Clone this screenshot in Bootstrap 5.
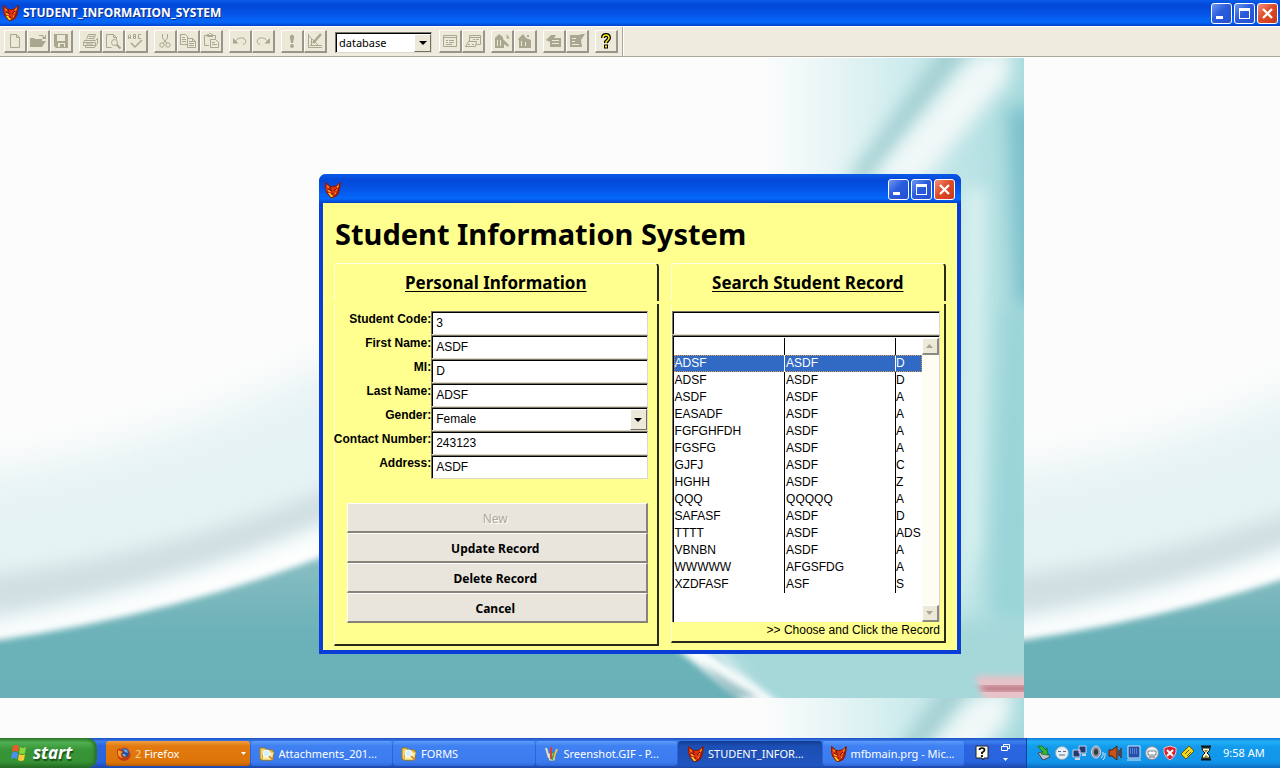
<!DOCTYPE html>
<html lang="en">
<head>
<meta charset="utf-8">
<meta name="viewport" content="width=device-width, initial-scale=1">
<title>STUDENT_INFORMATION_SYSTEM</title>
<link href="https://cdn.jsdelivr.net/npm/bootstrap@5.3.0/dist/css/bootstrap.min.css" rel="stylesheet">
<style>
  :root { --face: #ece9d8; --ui: "Noto Sans", "Open Sans", sans-serif; --arial: "Liberation Sans", Arial, sans-serif; }
  body { font: 12px/16px var(--arial); color: #000; background: #fdfdfd; }
  button, input, select { font: inherit; color: inherit; border-radius: 0; }
  svg { display: block; flex: none; }

  .xp-title { background: linear-gradient(#0a5ce8, #0348d8 20%, #0553e6 50%, #0468fb 85%, #0340c8); color: #fff; }
  .app-title { height: 26px; padding: 0 2px 0 3px; font: bold 12px/16px var(--ui); text-shadow: 1px 1px #0a2a80; }
  .cap-set { gap: 2px; }
  .cap-btn { width: 21px; height: 21px; padding: 0; border: 1px solid #fff; border-radius: 3px; background: linear-gradient(135deg, #6f98f0, #2b5cdd 45%, #2450d0); }
  .cap-close { background: linear-gradient(135deg, #f0917c, #df4c28 45%, #c8381a); }

  .tool-strip { height: 31px; padding: 0 4px; background: #eeecdf; border-top: 1px solid #fff; border-bottom: 1px solid #aca899; }
  .tool-group { margin-right: 6px; }
  .tool-btn { width: 23px; height: 23px; padding: 0; display: grid; place-items: center; color: #a9a790; background: var(--face); border: 1px solid #fff; border-right: 2px solid #98958a; border-bottom: 2px solid #98958a; }
  .tool-pick { width: 97px; height: 21px; margin: 2px 7px 0 2px; }
  .tool-end { width: 2px; height: 29px; border-left: 1px solid #aca899; border-right: 1px solid #fff; }

  .pick { position: relative; }
  .pick select { width: 100%; height: 100%; appearance: none; outline: 0; }
  .pick-arrow { position: absolute; right: 1px; top: 2px; bottom: 1px; width: 17px; display: grid; place-items: center; pointer-events: none; background: var(--face); border: 1px solid #fff; border-right-color: #716f64; border-bottom-color: #716f64; }
  .sunk { display: block; width: 100%; padding: 0 4px; background: #fff; border: 1px solid #dcd8c8; border-top-color: #77756a; border-left-color: #77756a; box-shadow: inset 1px 1px #000; outline: 0; }
  .tool-pick .sunk { font: 11px/15px var(--ui); padding: 0 3px; }

  .desk { border-top: 1px solid #fff; }
  .paper { position: absolute; inset: 0; width: 100%; height: 100%; }
  .dialog-win { position: relative; width: 100%; max-width: 642px; margin: 116px auto 0; border: 4px solid #0a3cd8; border-top: 0; border-radius: 7px 7px 0 0; background: #ffff8f; }
  .dialog-bar { height: 29px; margin: 0 -4px; padding: 2px 6px 0; border-radius: 7px 7px 0 0; }
  .dialog-body { padding: 13px 11px 4px; }
  .form-name { font: bold 29px/36px var(--ui); margin: 0 0 11px; padding-left: 1px; }

  .bevel-top, .bevel-rest { border-left: 1px solid #ffffd8; border-right: 2px solid #2a2a1c; }
  .bevel-top { height: 38px; padding-top: 7px; border-top: 1px solid #ffffe8; border-radius: 4px 4px 0 0; margin-bottom: 3px; }
  .bevel-top h2 { font: bold 17px/24px var(--ui); text-decoration: underline; text-underline-offset: 2px; margin: 0; text-align: center; }
  .bevel-rest { border-bottom: 2px solid #2a2a1c; padding-top: 7px; }
  .panel-info { flex: 324 1 0; margin-right: 12px; }
  .panel-find { flex: 275 1 0; }
  .panel-info .bevel-rest { padding-right: 9px; padding-bottom: 21px; }
  .panel-find .bevel-rest { padding: 7px 4px 3px 0; }

  .field-row { height: 24px; }
  .field-row label { flex: 96 1 0; min-width: 0; display: flex; justify-content: flex-end; font-weight: bold; white-space: nowrap; }
  .field-box { flex: 216 1 0; height: 24px; }
  .field-box .sunk { height: 24px; }
  .cmd-list { margin: 24px 0 0 12px; }
  .cmd-btn { height: 30px; padding: 2px 3px 0 0; font: bold 12px/16px var(--ui); background: #e9e5dc; border: 1px solid #fff; border-right: 2px solid #86847a; border-bottom: 2px solid #86847a; }
  .cmd-btn:disabled { font-weight: normal; color: #aca899; text-shadow: 1px 1px #fff; }

  .grid-box { height: 287px; padding: 2px 0 0 1px; border: 0; border-right: 1px solid #dcd8c8; border-top: 1px solid #77756a; border-left: 1px solid #77756a; box-shadow: inset 1px 1px #000; }
  .grid-table { table-layout: fixed; width: 100%; font: 12px/17px var(--arial); }
  .grid-table th, .grid-table td { height: 17px; padding: 0 0 0 1px; overflow: hidden; white-space: nowrap; font-weight: normal; }
  .grid-table th + th, .grid-table td + td { border-left: 1px solid #000; }
  .grid-table td:last-child { padding-left: 0; }
  .grid-table .c-wide { width: 111px; }
  .grid-table .picked { color: #fff; background: #316ac5; outline: 1px dotted #d89a4a; outline-offset: -1px; }
  .grid-table .picked td + td { border-left-color: #fff; }
  .scroll-rail { width: 17px; background: #fefdf3; }
  .scroll-btn { width: 17px; height: 17px; padding: 0; display: grid; place-items: center; background: var(--face); border: 1px solid #fff; border-right: 2px solid #8d8b80; border-bottom: 2px solid #8d8b80; }

  .task-strip { height: 30px; background: linear-gradient(#1d50c0, #3c80f0 12%, #2b66e0 25%, #2763dc 80%, #1c46a8); font: 11px/16px var(--ui); color: #fff; }
  .start-btn { width: 97px; height: 30px; padding: 0 0 0 9px; border: 0; border-radius: 0 10px 10px 0; color: #fff; background: linear-gradient(#2d7a2d, #4fae4f 15%, #379537 40%, #359235 80%, #226622); font: italic bold 17px/24px var(--ui); text-shadow: 1px 2px 1px #1d4f1d; box-shadow: inset -3px 0 3px #2a752a; }
  .task-list { margin-left: 9px; flex: 1 1 0; min-width: 0; }
  .task-btn { flex: 1 1 0; min-width: 0; height: 25px; margin: 3px 1px 0 0; padding: 0 4px 0 8px; border: 0; border-radius: 3px; color: #fff; text-align: left; background: linear-gradient(#5d9cfb, #3f80f2 20%, #3b7bee 85%, #2e66d8); }
  .task-alert { background: linear-gradient(#f0a040, #e27a10 20%, #dc7408 85%, #b95c00); padding-left: 10px; gap: 3px; }
  .task-count { color: #ffd08a; }
  .task-on { background: linear-gradient(#123a90, #1c4fb4 20%, #2054be); padding-left: 10px; }
  .lang-zone { width: 61px; gap: 12px; padding-right: 7px; }
  .tray { width: 254px; padding: 0 0 0 9px; border-left: 1px solid #0c3fa0; background: linear-gradient(#0f78d8, #20b0f5 12%, #129aec 30%, #1195ea 80%, #0c6cc0); }
  .tray time { margin-left: 6px; white-space: nowrap; }
</style>
</head>
<body class="d-flex flex-column min-vh-100">

<svg width="0" height="0" class="position-absolute" aria-hidden="true">
  <symbol id="fox" viewBox="0 0 16 16">
    <path d="M0 0l2 1 3 3h4l3-1 3-3 1 1-1 6-1 4-2 3-4 2H6l-3-3-2-3L0 6z" fill="#8c1a08"/>
    <path d="M1 2l4 3h5l4-3-1 5-1 4-3 3H7L3 11 1 7z" fill="#dc3410"/>
    <path d="M2 3l2 2-1 1zM14 2l-2 3 1 1zM3 11l2 0 2 2 1 2H6z" fill="#ffd21c"/>
    <path d="M3 8l3 1-1 1-2-1zM12 7l-2 2 2-1zM10 11l1-1-1 3z" fill="#ffe83a"/>
    <path d="M3 7l4 2M12 6L9 9M6 12h2M5 5l1 2" stroke="#400" stroke-width=".8" fill="none"/>
  </symbol>
  <symbol id="c-min" viewBox="0 0 19 19"><path d="M4 12h7v3H4z" fill="#fff"/></symbol>
  <symbol id="c-max" viewBox="0 0 19 19"><path d="M4 4h11v11H4zM5 7v7h9V7z" fill="#fff" fill-rule="evenodd"/></symbol>
  <symbol id="c-x" viewBox="0 0 19 19"><path d="M5 5l9 9M14 5l-9 9" stroke="#fff" stroke-width="2.300"/></symbol>
  <symbol id="folder" viewBox="0 0 16 16">
    <path d="M1 2h5l1 2h7v9l-2 1H2L1 12z" fill="#f6d568" stroke="#a07818"/>
    <path d="M4 6h11l-2 8H3z" fill="#ffeb9a" stroke="#b08820" stroke-width=".6"/>
    <circle cx="7.500" cy="7.500" r="3.500" fill="#d4f0ff" stroke="#fff"/><path d="M10 10l4 4" stroke="#d08030" stroke-width="1.600"/>
  </symbol>
</svg>

<header class="xp-title app-title d-flex align-items-center">
  <svg width="16" height="16"><use href="#fox"/></svg>
  <span class="ms-1 me-auto text-truncate">STUDENT_INFORMATION_SYSTEM</span>
  <div class="d-flex cap-set">
    <button class="cap-btn" aria-label="Minimize"><svg width="19" height="19"><use href="#c-min"/></svg></button>
    <button class="cap-btn" aria-label="Restore"><svg width="19" height="19"><use href="#c-max"/></svg></button>
    <button class="cap-btn cap-close" aria-label="Close"><svg width="19" height="19"><use href="#c-x"/></svg></button>
  </div>
</header>

<nav class="tool-strip d-flex align-items-center" aria-label="Standard toolbar">
  <div class="d-flex tool-group">
    <button class="tool-btn" aria-label="New"><svg width="16" height="16" fill="none" stroke="currentColor"><path d="M3.500 1.500h6l3 3v10h-9zM9.500 1.500v3h3"/></svg></button>
    <button class="tool-btn" aria-label="Open"><svg width="16" height="16" fill="currentColor"><path d="M0 5h4l1 1h7v2h4l-4 6H0zM9 2h4l1 2h1v-2h1v4h-4l1-2-1-1H9z"/></svg></button>
    <button class="tool-btn" aria-label="Save"><svg width="16" height="16" fill="currentColor" fill-rule="evenodd"><path d="M1 1h14v14H3l-2-2zM4 2v6h8V2zM5 10v4h2v-3h4v3h1v-4z"/></svg></button>
  </div>
  <div class="d-flex tool-group">
    <button class="tool-btn" aria-label="Print"><svg width="16" height="16" fill="none" stroke="currentColor"><path d="M4.500 6.500l2-5h7l-2 5M7 3.500h5M6.500 5.500h5M2.500 7.500h11l2-2v5l-2 2h-12v-3zM1.500 9.500h12v3M3.500 12.500v2h9l2-3M4 11h7"/></svg></button>
    <button class="tool-btn" aria-label="Print preview"><svg width="16" height="16" fill="none" stroke="currentColor"><path d="M6.500 14.500h-5v-13h7l3 3v2M8.500 1.500v3h3"/><circle cx="9.500" cy="9.500" r="3"/><path d="M11.500 11.500l4 4" stroke-width="2"/></svg></button>
    <button class="tool-btn" aria-label="Spelling"><svg width="18" height="16" fill="none" stroke="currentColor"><path d="M1.500 6V2.500l1-1 1 1V6M1.500 4.500h2M6.500 1.500v4h2v-4zM6.500 3.500h2M14 1.500h-2.500v4H14"/><path d="M4 10l4 4 7-7" stroke-width="1.500"/></svg></button>
  </div>
  <div class="d-flex tool-group">
    <button class="tool-btn" aria-label="Cut"><svg width="16" height="16" fill="none" stroke="currentColor"><path d="M5.500 1v4l4 5M10.500 1v4l-4 5"/><circle cx="5" cy="12" r="2.200"/><circle cx="11" cy="12" r="2.200"/></svg></button>
    <button class="tool-btn" aria-label="Copy"><svg width="16" height="16" fill="none" stroke="currentColor"><path d="M7 11.500H.5v-10h5l2 2v2M2 4.500h3M2 6.500h4M2 8.500h4M7.500 5.500h5l3 3v6h-8zM9 8.500h3M9 10.500h5M9 12.500h5M12.500 5.500v3h3"/></svg></button>
    <button class="tool-btn" aria-label="Paste"><svg width="16" height="16" fill="none" stroke="currentColor"><path d="M6 12.500H1.500v-10h11V6M4.500 3.500v-2h1l1-1h1l1 1h1v2zM7.500 6.500h5l3 3v5h-8zM9 9.500h3M9 11.500h5"/></svg></button>
  </div>
  <div class="d-flex tool-group">
    <button class="tool-btn" aria-label="Undo"><svg width="16" height="16" fill="none" stroke="currentColor"><path d="M2.500 9.500C5 5 9 4 12 5.500c3 2 2 5-1 6"/><path d="M1 5v5.500h5.500z" fill="currentColor" stroke="none"/></svg></button>
    <button class="tool-btn" aria-label="Redo"><svg width="16" height="16" fill="none" stroke="currentColor"><path d="M13.500 9.500C11 5 7 4 4 5.500c-3 2-2 5 1 6"/><path d="M15 5v5.500H9.500z" fill="currentColor" stroke="none"/></svg></button>
  </div>
  <div class="d-flex tool-group">
    <button class="tool-btn" aria-label="Run"><svg width="16" height="16" fill="currentColor"><path d="M6 3q2-3 4 0v2l-1 5H7L6 5z"/><circle cx="8" cy="13" r="1.900"/></svg></button>
    <button class="tool-btn" aria-label="Modify form"><svg width="16" height="16" fill="none" stroke="currentColor"><path d="M1.500 1v13.500H15M2 3l9 9M3 12.500h12M4.500 6v6"/><path d="M6 10l8-9" stroke-width="2.500"/></svg></button>
  </div>
  <div class="pick tool-pick">
    <select class="sunk" aria-label="Database"><option>database</option></select>
    <span class="pick-arrow"><svg width="8" height="4"><path d="M0 0h8L4 4z"/></svg></span>
  </div>
  <div class="d-flex tool-group">
    <button class="tool-btn" aria-label="Command window"><svg width="16" height="16" fill="none" stroke="currentColor"><path d="M1.500 2.500h13v11h-13zM1.500 4.500h13M4 7.500h2M7 7.500h5M4 9.500h2M7 9.500h5M4 11.500h6"/></svg></button>
    <button class="tool-btn" aria-label="Data session"><svg width="16" height="16" fill="none" stroke="currentColor"><path d="M4.500 8V2.500h11v9h-4M5 4.500h10M8 6.500h2M11 6.500h3M.5 13.500l3-5h8l-1 5zM3 11.500h2M7 11.500h2"/></svg></button>
  </div>
  <div class="d-flex tool-group">
    <button class="tool-btn" aria-label="Form wizard"><svg width="16" height="16" fill="currentColor" fill-rule="evenodd"><path d="M1 5l4-4 4 3v2l6 6-1 2-4-3v4H1zM12 1l1 2 2-1-1 2 2 1-3 1zM3 7v6h1V7zm3 0v6h1V7z"/></svg></button>
    <button class="tool-btn" aria-label="Report wizard"><svg width="16" height="16" fill="currentColor" fill-rule="evenodd"><path d="M1 6l5-5 3 4 5 2v8H2V8zM10 2h2v2h-2zM4 8v5h1V8zm4 1v4h1V9z"/></svg></button>
  </div>
  <div class="d-flex tool-group">
    <button class="tool-btn" aria-label="AutoForm wizard"><svg width="16" height="16" fill="currentColor" fill-rule="evenodd"><path d="M0 7l5-5h5l-2 3h7v9H4v-5zM6 7v1h7V7zm0 3v1h7v-1z"/></svg></button>
    <button class="tool-btn" aria-label="AutoReport wizard"><svg width="16" height="16" fill="currentColor" fill-rule="evenodd"><path d="M1 2h9l3-1h3l-4 6 1 7H1zM3 5v1h4V5zm0 3v1h3V8zm0 3v1h7v-1z"/></svg></button>
  </div>
  <button class="tool-btn" aria-label="Help"><svg width="14" height="16" fill="none"><path d="M4 5q0-3 3-3t3 3q0 1-3 4v1" stroke="#000" stroke-width="4"/><path d="M5 13.500h4" stroke="#000" stroke-width="4"/><path d="M4 5q0-3 3-3t3 3q0 1-3 4v1" stroke="#ffee10" stroke-width="1.500"/><path d="M6 13.500h2" stroke="#ffee10" stroke-width="2"/></svg></button>
  <span class="tool-end ms-1"></span>
</nav>

<main class="desk position-relative flex-grow-1">
  <svg class="paper" aria-hidden="true">
    <defs>
      <filter id="b3" x="-20%" y="-20%" width="140%" height="140%"><feGaussianBlur stdDeviation="3"/></filter>
      <filter id="b10" x="-60%" y="-60%" width="220%" height="220%"><feGaussianBlur stdDeviation="9"/></filter>
      <filter id="b22" x="-60%" y="-60%" width="220%" height="220%"><feGaussianBlur stdDeviation="20"/></filter>
      <linearGradient id="sea" x1="0" y1="0" x2="0" y2="1"><stop offset="0" stop-color="#8cbfc4"/><stop offset=".5" stop-color="#6cb2b8"/><stop offset="1" stop-color="#68b0b8"/></linearGradient>
      <linearGradient id="east" x1="0" y1="0" x2="1" y2="0"><stop offset="0" stop-color="#d0eeee" stop-opacity="0"/><stop offset=".5" stop-color="#c4e8ea" stop-opacity=".8"/><stop offset="1" stop-color="#a2d8da"/></linearGradient>
      <pattern id="tile" width="1024" height="640" patternUnits="userSpaceOnUse">
        <rect width="1024" height="640" fill="#fcfcfc"/>
        <path d="M-60 420Q150 400 340 300L700 330V600H-60z" fill="#e6f3f4" filter="url(#b22)"/>
        <path d="M-40 520Q180 500 400 400L420 420Q200 530-40 560z" fill="#d0dfe2" filter="url(#b10)"/>
        <path d="M-40 574Q150 545 330 470L480 400V450Q200 570-40 590z" fill="#fff" filter="url(#b10)"/>
        <path d="M-40 588Q170 560 340 492Q560 470 720 600L780 660H-40z" fill="url(#sea)" filter="url(#b3)"/>
        <rect x="760" y="-20" width="280" height="700" fill="url(#east)"/>
        <path d="M700 570L1040 560V660H770z" fill="#a6d8da" filter="url(#b10)"/>
        <path d="M950-20H985L870 125H845z" fill="#a2cfd1" filter="url(#b10)"/>
        <path d="M970 0L1010-10V20L920 125H870z" fill="#f1f8f8" filter="url(#b10)"/>
        <path d="M1008 50H1040V250H1016z" fill="#7cc0cc" filter="url(#b10)"/>
        <path d="M965 130H985L980 480L960 560z" fill="#dcf2f2" filter="url(#b10)"/>
        <path d="M1005 250H1030V560H990z" fill="#9ad4d8" filter="url(#b10)"/>
        <path d="M650 570L690 580L780 645H745z" fill="#f8fcfc" filter="url(#b3)"/>
        <path d="M700 605L760 640H735z" fill="#4d8f96" opacity=".5" filter="url(#b3)"/>
        <path d="M975 618H1030V645H985z" fill="#e7c2c8" filter="url(#b3)"/>
        <path d="M978 628H1030V633H985z" fill="#a85a68" filter="url(#b3)"/>
      </pattern>
    </defs>
    <rect width="100%" height="100%" fill="url(#tile)"/>
  </svg>

  <section class="dialog-win" aria-label="Student Information System">
    <div class="xp-title dialog-bar d-flex align-items-center">
      <svg class="me-auto" width="16" height="16"><use href="#fox"/></svg>
      <div class="d-flex cap-set">
        <button class="cap-btn" aria-label="Minimize"><svg width="19" height="19"><use href="#c-min"/></svg></button>
        <button class="cap-btn" aria-label="Maximize"><svg width="19" height="19"><use href="#c-max"/></svg></button>
        <button class="cap-btn cap-close" aria-label="Close"><svg width="19" height="19"><use href="#c-x"/></svg></button>
      </div>
    </div>
    <div class="dialog-body">
      <h1 class="form-name">Student Information System</h1>
      <div class="d-flex align-items-start">
        <form class="panel-info">
          <div class="bevel-top"><h2>Personal Information</h2></div>
          <div class="bevel-rest">
            <div class="field-row d-flex"><label for="code">Student Code:</label><div class="field-box"><input class="sunk" id="code" value="3"></div></div>
            <div class="field-row d-flex"><label for="first">First Name:</label><div class="field-box"><input class="sunk" id="first" value="ASDF"></div></div>
            <div class="field-row d-flex"><label for="mi">MI:</label><div class="field-box"><input class="sunk" id="mi" value="D"></div></div>
            <div class="field-row d-flex"><label for="last">Last Name:</label><div class="field-box"><input class="sunk" id="last" value="ADSF"></div></div>
            <div class="field-row d-flex"><label for="gender">Gender:</label><div class="field-box pick"><select class="sunk" id="gender"><option>Female</option><option>Male</option></select><span class="pick-arrow"><svg width="8" height="4"><path d="M0 0h8L4 4z"/></svg></span></div></div>
            <div class="field-row d-flex"><label for="phone">Contact Number:</label><div class="field-box"><input class="sunk" id="phone" value="243123"></div></div>
            <div class="field-row d-flex"><label for="addr">Address:</label><div class="field-box"><input class="sunk" id="addr" value="ASDF"></div></div>
            <div class="cmd-list d-grid">
              <button type="button" class="cmd-btn" disabled>New</button>
              <button type="button" class="cmd-btn">Update Record</button>
              <button type="button" class="cmd-btn">Delete Record</button>
              <button type="button" class="cmd-btn">Cancel</button>
            </div>
          </div>
        </form>
        <div class="panel-find">
          <div class="bevel-top"><h2>Search Student Record</h2></div>
          <div class="bevel-rest">
            <div class="field-row"><input class="sunk h-100" aria-label="Search student record"></div>
            <div class="grid-box d-flex bg-white">
              <div class="flex-grow-1 overflow-hidden">
                <table class="grid-table">
                  <colgroup><col class="c-wide"><col class="c-wide"><col></colgroup>
                  <thead><tr><th></th><th></th><th></th></tr></thead>
                  <tbody>
                    <tr class="picked"><td>ADSF</td><td>ASDF</td><td>D</td></tr>
                    <tr><td>ADSF</td><td>ASDF</td><td>D</td></tr>
                    <tr><td>ASDF</td><td>ASDF</td><td>A</td></tr>
                    <tr><td>EASADF</td><td>ASDF</td><td>A</td></tr>
                    <tr><td>FGFGHFDH</td><td>ASDF</td><td>A</td></tr>
                    <tr><td>FGSFG</td><td>ASDF</td><td>A</td></tr>
                    <tr><td>GJFJ</td><td>ASDF</td><td>C</td></tr>
                    <tr><td>HGHH</td><td>ASDF</td><td>Z</td></tr>
                    <tr><td>QQQ</td><td>QQQQQ</td><td>A</td></tr>
                    <tr><td>SAFASF</td><td>ASDF</td><td>D</td></tr>
                    <tr><td>TTTT</td><td>ASDF</td><td>ADS</td></tr>
                    <tr><td>VBNBN</td><td>ASDF</td><td>A</td></tr>
                    <tr><td>WWWWW</td><td>AFGSFDG</td><td>A</td></tr>
                    <tr><td>XZDFASF</td><td>ASF</td><td>S</td></tr>
                  </tbody>
                </table>
              </div>
              <div class="scroll-rail d-flex flex-column justify-content-between">
                <button class="scroll-btn" aria-label="Scroll up"><svg width="7" height="4"><path d="M0 4h7L3.500 0z" fill="#a9a790"/></svg></button>
                <button class="scroll-btn" aria-label="Scroll down"><svg width="7" height="4"><path d="M0 0h7L3.500 4z" fill="#a9a790"/></svg></button>
              </div>
            </div>
            <div class="text-end">&gt;&gt; Choose and Click the Record</div>
          </div>
        </div>
      </div>
    </div>
  </section>
</main>

<footer class="task-strip d-flex">
  <button class="start-btn d-flex align-items-center">
    <svg width="20" height="20"><path d="M4 3q3-2 6 0L9 9Q6 7 3 9z" fill="#f0582c"/><path d="M11 4q3 2 6 0l-1 6q-3 2-6 0z" fill="#8cd63c"/><path d="M3 10q3-2 6 0l-1 6q-3-2-6 0z" fill="#4a90f4"/><path d="M10 11q3 2 6 0l-1 6q-3 2-6 0z" fill="#fccc30"/></svg>
    <span class="ms-1">start</span>
  </button>
  <div class="task-list d-flex">
    <button class="task-btn task-alert d-flex align-items-center"><svg width="16" height="16"><circle cx="8" cy="8" r="7" fill="#e2641c"/><circle cx="8.500" cy="7" r="4.700" fill="#27509c"/><path d="M7 3l4 1 1 3-3-1zM6 8l3 0 1 2-2 1z" fill="#6fb0e0"/><path d="M1 4q3-3 4 0l3 1-2 2q0 4 5 4l3-5q2 8-6 9Q0 14 1 4z" fill="#c03a10"/><path d="M2 4l2 1 3 1-2 1q-1 3 2 5-6 0-5-8z" fill="#f6a030"/></svg><span class="task-count">2</span><span class="me-auto">Firefox</span><svg width="5" height="3"><path d="M0 0h5L2.500 3z" fill="#fff"/></svg></button>
    <button class="task-btn d-flex align-items-center gap-1"><svg width="16" height="16"><use href="#folder"/></svg><span class="text-truncate">Attachments_201...</span></button>
    <button class="task-btn d-flex align-items-center gap-1"><svg width="16" height="16"><use href="#folder"/></svg><span>FORMS</span></button>
    <button class="task-btn d-flex align-items-center gap-1"><svg width="16" height="16"><path d="M3 7h9l-1 8H5z" fill="#b8dcf0" stroke="#466a90" stroke-width=".7"/><path d="M5 12L2 2" stroke="#e8e0c0" stroke-width="2"/><path d="M7 13V1" stroke="#d84030" stroke-width="2"/><path d="M9 13l4-10" stroke="#e8c850" stroke-width="2"/><path d="M8 14l2-8" stroke="#48a048" stroke-width="1.500"/></svg><span class="text-truncate">Sreenshot.GIF - P...</span></button>
    <button class="task-btn task-on d-flex align-items-center gap-1"><svg width="16" height="16"><use href="#fox"/></svg><span class="text-truncate">STUDENT_INFOR...</span></button>
    <button class="task-btn d-flex align-items-center gap-1"><svg width="16" height="16"><use href="#fox"/></svg><span class="text-truncate">mfbmain.prg - Mic...</span></button>
  </div>
  <div class="lang-zone d-flex align-items-center justify-content-center">
    <svg width="14" height="16"><path d="M1 1h12v12H9l-1 2-1-2H1z" fill="#fffef0" stroke="#222"/><path d="M4.500 5q0-2 2.500-2t2.500 2Q9.500 6.500 7 7.500V9M7 10v2" fill="none" stroke="#000" stroke-width="1.700"/></svg>
    <svg width="9" height="20" fill="none" stroke="#fff"><path d="M2.500 3.500v-2h6v4h-2M.5 3.500h6v4h-6z"/><path d="M2 15h5l-2.500 3z" fill="#fff" stroke="none"/></svg>
  </div>
  <div class="tray d-flex align-items-center">
    <svg width="181" height="18">
      <g transform="translate(0 1)"><path d="M2 8l8-2 4 6-7 3z" fill="#b8c4cc" stroke="#445"/><path d="M2 1l4 0 4 4 1-2 1 7-7-1 2-2-4-4z" fill="#35b535" stroke="#146014" stroke-width=".7"/></g>
      <g transform="translate(18 1)"><circle cx="8" cy="8" r="6.500" fill="#e6f0f8" stroke="#8aa4b8"/><path d="M4 6.500h3M9 6.500h3M5 10h6" stroke="#667"/></g>
      <g transform="translate(36 1)"><path d="M7 1h7v7H7zM1 5h7v7H1z" fill="#26386e" stroke="#c8d4ec"/><path d="M3 14h5M10 10h4" stroke="#c8d4ec" stroke-width="2"/></g>
      <g transform="translate(54 1)"><ellipse cx="6" cy="7" rx="4.500" ry="6" fill="#8c9298" stroke="#dde" /><ellipse cx="6" cy="7" rx="2" ry="3" fill="#33383e"/><path d="M11 13q3-2 2-6M13 15q3-3 2-7" fill="none" stroke="#d0e4f4"/></g>
      <g transform="translate(72 1)"><path d="M1 5h3l5-4v14l-5-4H1z" fill="#c8501c" stroke="#541c08"/><path d="M11 5v6M13 3v10" stroke="#6a1808" stroke-width="1.300"/></g>
      <g transform="translate(90 1)"><path d="M2 1h12v12H2z" fill="#2450a8" stroke="#d8e4f8"/><path d="M4 4h8M4 6h8M4 8h8" stroke="#88b0e8" stroke-dasharray="1 1"/><path d="M1 15h14" stroke="#dde"/></g>
      <g transform="translate(108 1)"><circle cx="8" cy="8" r="6.500" fill="#e8eef0" stroke="#889"/><path d="M4 6h8v4H4z" fill="#fff" stroke="#79868c"/><path d="M5 12h6" stroke="#667"/></g>
      <g transform="translate(126 1)"><path d="M8 1l6 2q1 8-6 12Q1 11 2 3z" fill="#d82030" stroke="#f4c0c0"/><path d="M5 5l6 6M11 5l-6 6" stroke="#fff" stroke-width="2"/></g>
      <g transform="translate(144 1)"><path d="M1 9l8-8 5 5-8 8z" fill="#f0d820" stroke="#6a5a00"/><path d="M5 9l4-4M7 11l4-4" stroke="#6a5a00"/></g>
      <g transform="translate(162 1)"><path d="M3 1.500h10M3 14.500h10" stroke="#111" stroke-width="2"/><path d="M4 3h8q0 3-3 5 3 2 3 5H4q0-3 3-5-3-2-3-5z" fill="#fff8d0" stroke="#111"/><path d="M6 5h4L8 8zM5 13l3-3 3 3z" fill="#a08830"/></g>
    </svg>
    <time>9:58 AM</time>
  </div>
</footer>

<script src="https://cdn.jsdelivr.net/npm/bootstrap@5.3.0/dist/js/bootstrap.bundle.min.js"></script>
</body>
</html>
